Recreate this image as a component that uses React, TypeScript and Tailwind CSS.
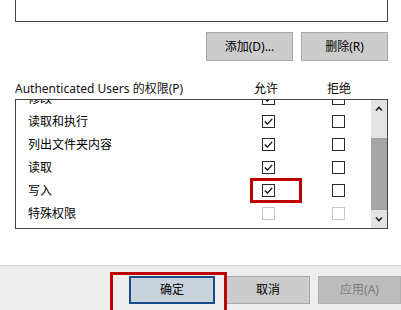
import React from "react";

const font = { fontFamily: '"Noto Sans", "Noto Sans CJK SC", sans-serif' };

function Box({ checked, disabled }: { checked?: boolean; disabled?: boolean }) {
  return (
    <div
      className={
        "w-[13px] h-[13px] border bg-white flex items-center justify-center " +
        (disabled ? "border-[#c8c8c8]" : "border-[#2a2a2a]")
      }
    >
      {checked && (
        <svg width="11" height="11" viewBox="0 0 11 11">
          <path d="M1.8 5.6 L4.4 8.1 L9.2 2.9" fill="none" stroke="#111" strokeWidth="1.4" />
        </svg>
      )}
    </div>
  );
}

const rows: { label: string; allow: boolean; deny: boolean; disabled?: boolean }[] = [
  { label: "修改", allow: true, deny: false },
  { label: "读取和执行", allow: true, deny: false },
  { label: "列出文件夹内容", allow: true, deny: false },
  { label: "读取", allow: true, deny: false },
  { label: "写入", allow: true, deny: false },
  { label: "特殊权限", allow: false, deny: false, disabled: true },
];

export default function App() {
  return (
    <div
      className="relative w-[401px] h-[310px] bg-white flex flex-col text-[12px] text-[#000] overflow-hidden"
      style={font}
    >
      {/* top list box (bottom part) */}
      <div className="ml-[15px] w-[373px] h-[22px] border-x border-b border-[#444]" />

      {/* add / remove buttons */}
      <div className="mt-[10px] flex justify-end gap-[8px] pr-[13px]">
        <div className="w-[87px] h-[29px] bg-[#cccccc] border border-[#a8a8a8] flex items-center justify-center">
          添加(D)...
        </div>
        <div className="w-[87px] h-[29px] bg-[#cccccc] border border-[#a8a8a8] flex items-center justify-center">
          删除(R)
        </div>
      </div>

      {/* header */}
      <div className="mt-[19px] h-[18px] flex items-center pl-[15px]">
        <div className="w-[239px] text-[#111]">Authenticated Users 的权限(P)</div>
        <div className="w-[73px]">允许</div>
        <div>拒绝</div>
      </div>

      {/* permissions list */}
      <div className="mt-[1px] ml-[15px] w-[373px] h-[130px] border border-[#444] flex overflow-hidden">
        <div className="flex-1 overflow-hidden">
          <div className="-mt-[13px]">
            {rows.map((r) => (
              <div key={r.label} className="h-[23px] flex items-center">
                <div className="w-[246px] pl-[12px]">{r.label}</div>
                <Box checked={r.allow} disabled={r.disabled} />
                <div className="w-[57px]" />
                <Box checked={r.deny} disabled={r.disabled} />
              </div>
            ))}
          </div>
        </div>
        <div className="w-[16px] bg-[#e3e3e3] flex flex-col">
          <div className="h-[17px] flex items-center justify-center">
            <svg width="8" height="6" viewBox="0 0 8 6">
              <path d="M1 4.5 L4 1.5 L7 4.5" fill="none" stroke="#222" strokeWidth="1.6" />
            </svg>
          </div>
          <div className="h-[21px]" />
          <div className="h-[72px] bg-[#a6a6a6]" />
          <div className="flex-1 flex items-center justify-center">
            <svg width="8" height="6" viewBox="0 0 8 6">
              <path d="M1 1.5 L4 4.5 L7 1.5" fill="none" stroke="#222" strokeWidth="1.6" />
            </svg>
          </div>
        </div>
      </div>

      <div className="flex-1" />

      {/* bottom bar */}
      <div className="h-[45px] bg-[#ededed] border-t border-[#d2d2d2] flex items-start pt-[10px] pl-[129px]">
        <div className="w-[86px] h-[28px] bg-[#c9d3dd] border-2 border-[#1a4c8c] flex items-center justify-center">
          确定
        </div>
        <div className="ml-[11px] w-[84px] h-[28px] bg-[#cccccc] border border-[#a8a8a8] flex items-center justify-center">
          取消
        </div>
        <div className="ml-[8px] flex-1 h-[28px] bg-[#bcbcbc] border border-[#b0b0b0] flex items-center justify-center text-[#7c7c7c]">
          应用(A)
        </div>
      </div>

      {/* red highlight overlays */}
      <div className="absolute left-[250px] top-[178px] w-[52px] h-[25px] border-[3px] border-[#c00000]" />
      <div className="absolute left-[110px] top-[272px] w-[117px] h-[44px] border-[3px] border-[#c00000]" />
    </div>
  );
}
